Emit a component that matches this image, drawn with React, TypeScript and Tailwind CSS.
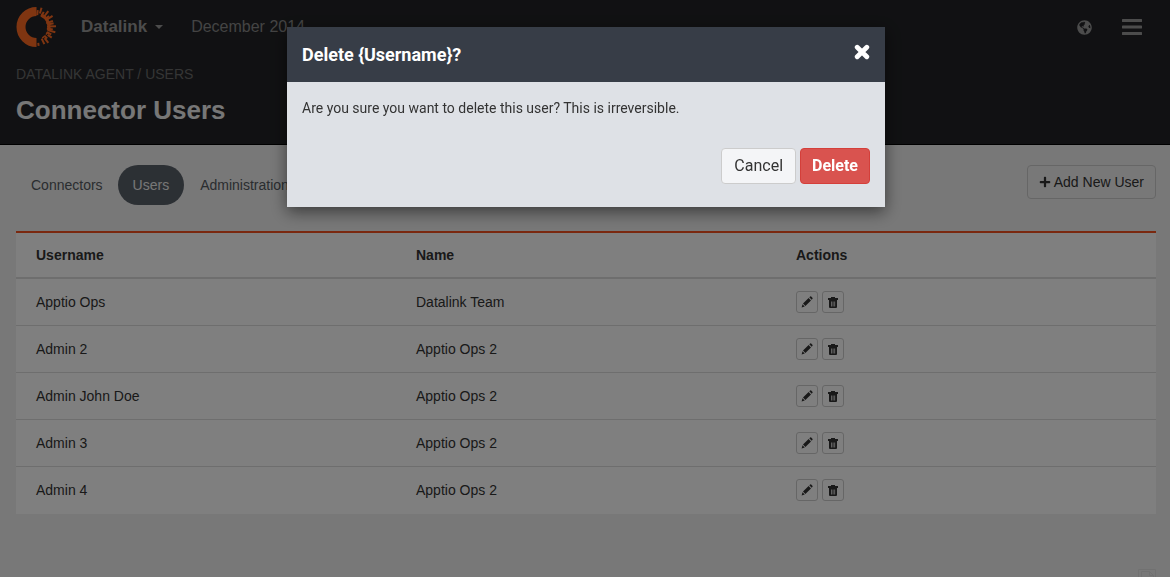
import { FaGlobeAmericas, FaPlus } from "react-icons/fa";

const users = [
  { username: "Apptio Ops", name: "Datalink Team" },
  { username: "Admin 2", name: "Apptio Ops 2" },
  { username: "Admin John Doe", name: "Apptio Ops 2" },
  { username: "Admin 3", name: "Apptio Ops 2" },
  { username: "Admin 4", name: "Apptio Ops 2" },
];

const rays = [
  { a: -84, r1: 12, r2: 17 },
  { a: -74, r1: 14, r2: 20 },
  { a: -63, r1: 12, r2: 17 },
  { a: -52, r1: 13, r2: 20 },
  { a: -40, r1: 12, r2: 17 },
  { a: -34, r1: 13, r2: 20 },
  { a: -20, r1: 11, r2: 18 },
  { a: -12, r1: 12, r2: 18 },
  { a: -2, r1: 11, r2: 20 },
  { a: 8, r1: 11, r2: 17 },
  { a: 15, r1: 12, r2: 20 },
  { a: 26, r1: 12, r2: 17 },
  { a: 34, r1: 14, r2: 19 },
  { a: 46, r1: 12, r2: 16 },
  { a: 52, r1: 14, r2: 20 },
  { a: 64, r1: 13, r2: 19 },
  { a: 82, r1: 16, r2: 19 },
];

function Logo() {
  return (
    <svg width="40" height="40" viewBox="-20 -20 40 40" aria-hidden="true">
      <g fill="none" stroke="#ff6a22">
        <path d="M0.500-15.500A15.500 15.500 0 1 0 0.500 15.500" strokeWidth="9" />
        <path d="M5-12A13 13 0 0 1 12.500 3.500" strokeWidth="3" />
        <path d="M11.500 5A12.500 12.500 0 0 1 6 11" strokeWidth="1.500" strokeDasharray="3 2" />
        {rays.map(({ a, r1, r2 }) => (
          <path key={a} d={`M${r1} 0H${r2}`} transform={`rotate(${a})`} strokeWidth="2" />
        ))}
      </g>
    </svg>
  );
}

function PencilIcon() {
  return (
    <svg width="12" height="12" viewBox="0 0 12 12" fill="currentColor" aria-hidden="true">
      <path d="M8.300 1.300L9.200.5Q9.700.1 10.200.6L11.400 1.800Q11.900 2.300 11.500 2.800L10.700 3.700zM7.600 2L10 4.400L4.400 10L2 7.600zM1.500 8.200L3.800 10.500L.6 11.400z" />
    </svg>
  );
}

function TrashIcon() {
  return (
    <svg width="10" height="11" viewBox="0 0 10 11" aria-hidden="true">
      <path
        fill="currentColor"
        fillRule="evenodd"
        d="M3 0h4v1h3v2H0V1h3zM1 3h8v7q0 1-1 1H2q-1 0-1-1zM3 4.500V9.500h.7V4.500zM4.700 4.500V9.500h.7V4.500zM6.400 4.500V9.500h.7V4.500z"
      />
    </svg>
  );
}

function CloseIcon() {
  return (
    <svg width="16" height="16" viewBox="0 0 16 16" aria-hidden="true">
      <path d="M3.200 3.200L12.800 12.800M12.800 3.200L3.200 12.800" stroke="currentColor" strokeWidth="4.800" strokeLinecap="round" />
    </svg>
  );
}

const iconButton =
  "flex size-[22px] items-center justify-center rounded-[3px] border border-[#ccc] text-[#333]";

export default function App() {
  return (
    <div className="flex min-h-screen flex-col bg-[#f0f0f0] font-['Liberation_Sans',Arial,sans-serif] text-sm text-[#333]">
      <header className="border-b border-black bg-[#222326] pr-7 pb-4 pl-4">
        <div className="flex h-[54px] items-center">
          <Logo />
          <button className="ml-[25px] flex items-center gap-2 text-[17px] font-bold text-[#999]">
            Datalink
            <svg width="8" height="4" viewBox="0 0 8 4" aria-hidden="true">
              <path d="M0 0h8L4 4z" fill="currentColor" />
            </svg>
          </button>
          <span className="ml-7 text-base text-[#888]">December 2014</span>
          <button aria-label="Language" className="ml-auto text-[#999]">
            <FaGlobeAmericas size={15} />
          </button>
          <button aria-label="Menu" className="ml-[30px] text-[#999]">
            <svg width="20" height="16" viewBox="0 0 20 16" aria-hidden="true">
              <path d="M1 1.500h18M1 8h18M1 14.500h18" stroke="currentColor" strokeWidth="3" strokeLinecap="round" />
            </svg>
          </button>
        </div>
        <p className="pt-[10px] leading-5 text-[#6b6b6b] uppercase">Datalink Agent / Users</p>
        <h1 className="pt-2 text-[26px] leading-9 font-bold text-[#eee]">Connector Users</h1>
      </header>

      <main className="pr-3.5 pl-4">
        <div className="flex items-start justify-between py-5">
          <nav className="flex leading-10 text-[#555a60]">
            <a href="#connectors" className="px-[15px]">Connectors</a>
            <a href="#users" className="rounded-full bg-[#596069] px-[15px] text-[#eee]">Users</a>
            <a href="#administration" className="px-4">Administration</a>
          </nav>
          <button className="flex h-[34px] items-center gap-[3px] rounded-sm border border-[#ccc] px-[11px]">
            <FaPlus size={12} />
            Add New User
          </button>
        </div>

        <table className="mt-[6px] w-full table-fixed border-separate border-spacing-0 border-t-2 border-[#f4511e] bg-white text-left">
          <thead>
            <tr>
              {["Username", "Name", "Actions"].map((title) => (
                <th key={title} className="h-[46px] border-b-2 border-[#ddd] px-5 font-bold">
                  {title}
                </th>
              ))}
            </tr>
          </thead>
          <tbody>
            {users.map((user) => (
              <tr key={user.username} className="group">
                <td className="h-[47px] border-b border-[#ddd] px-5 group-last:border-white">{user.username}</td>
                <td className="border-b border-[#ddd] px-5 group-last:border-white">{user.name}</td>
                <td className="border-b border-[#ddd] px-5 group-last:border-white">
                  <div className="flex gap-1">
                    <button aria-label={`Edit ${user.username}`} className={iconButton}>
                      <PencilIcon />
                    </button>
                    <button aria-label={`Delete ${user.username}`} className={iconButton}>
                      <TrashIcon />
                    </button>
                  </div>
                </td>
              </tr>
            ))}
          </tbody>
        </table>
      </main>

      <footer className="mt-auto flex justify-end pr-3.5">
        <svg width="18" height="8" viewBox="0 0 18 8" aria-hidden="true">
          <path d="M.5 8V.5h17V8M3.500 8V2.500h8l4 4V8M11.500 2.500v4h4" fill="none" stroke="#e2e2e2" />
        </svg>
      </footer>

      <div className="fixed inset-0 flex items-start justify-center bg-black/50 pt-[27px] pr-4 pl-[18px]">
        <section
          role="dialog"
          aria-modal="true"
          aria-labelledby="dialog-title"
          className="w-full max-w-[598px] bg-[#dee1e6] font-[Roboto,sans-serif] shadow-[0_5px_15px_rgba(0,0,0,0.5)]"
        >
          <div className="flex h-[55px] items-center justify-between bg-[#373d47] px-[15px] text-white">
            <h2 id="dialog-title" className="text-lg font-bold">{"Delete {Username}?"}</h2>
            <button aria-label="Close" className="pb-1.5">
              <CloseIcon />
            </button>
          </div>
          <p className="px-[15px] pt-4 leading-5">Are you sure you want to delete this user? This is irreversible.</p>
          <div className="flex justify-end gap-1 px-[15px] pt-[30px] pb-[23px] text-base">
            <button className="h-9 rounded-sm border border-[#ccc] bg-[#f4f5f7] px-3">Cancel</button>
            <button className="h-9 rounded-sm border border-[#d43f3a] bg-[#d9534f] px-[11px] font-bold text-white">
              Delete
            </button>
          </div>
        </section>
      </div>
    </div>
  );
}
